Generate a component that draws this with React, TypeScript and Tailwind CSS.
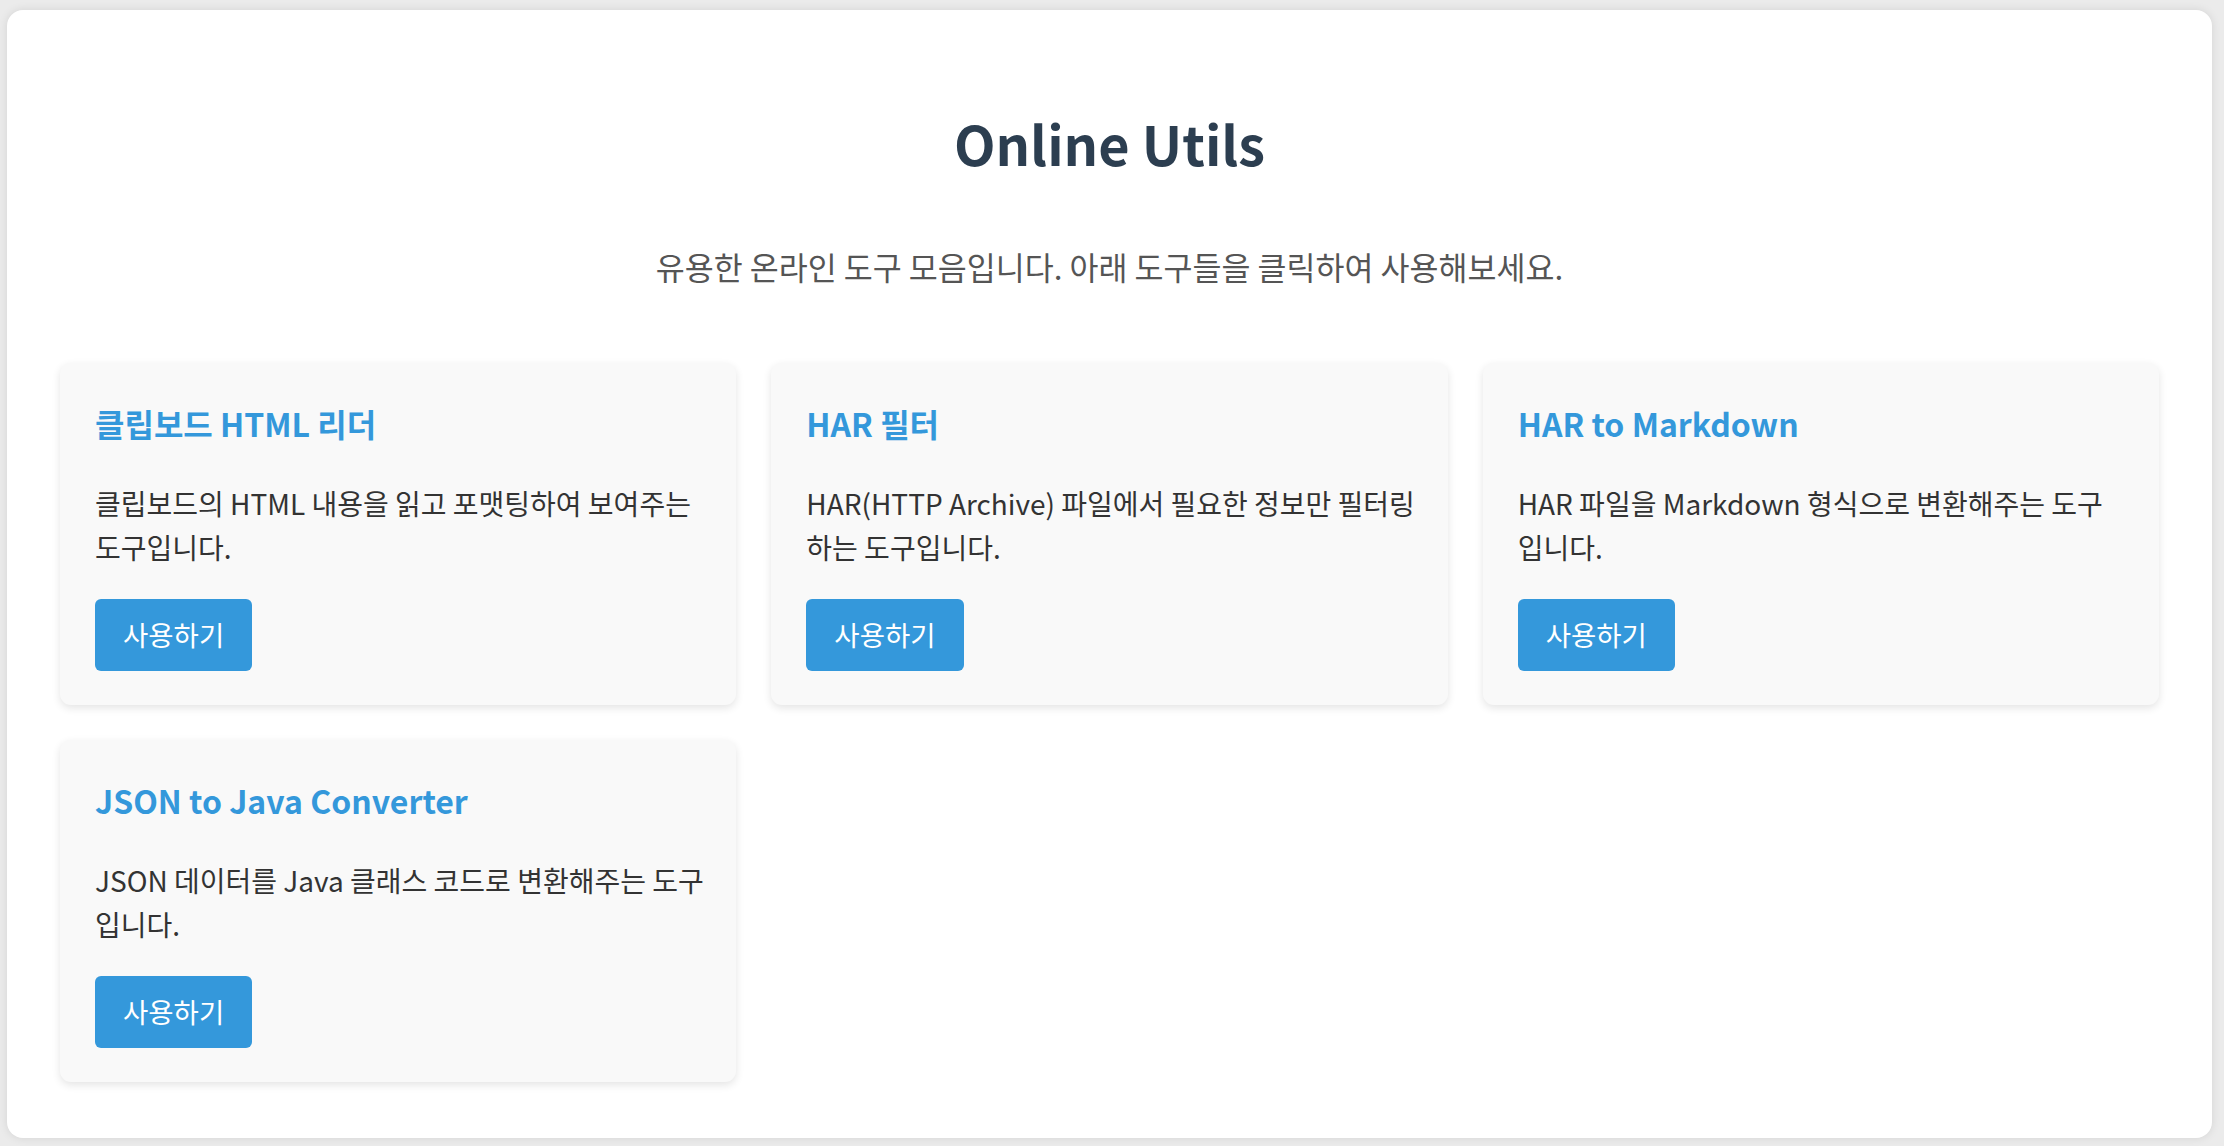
import React from 'react';

type Tool = {
  title: string;
  lines: [string, string];
};

// lines are split where the reference wraps them
const tools: Tool[] = [
  {
    title: '클립보드 HTML 리더',
    lines: ['클립보드의 HTML 내용을 읽고 포맷팅하여 보여주는', '도구입니다.'],
  },
  {
    title: 'HAR 필터',
    lines: ['HAR(HTTP Archive) 파일에서 필요한 정보만 필터링', '하는 도구입니다.'],
  },
  {
    title: 'HAR to Markdown',
    lines: ['HAR 파일을 Markdown 형식으로 변환해주는 도구', '입니다.'],
  },
  {
    title: 'JSON to Java Converter',
    lines: ['JSON 데이터를 Java 클래스 코드로 변환해주는 도구', '입니다.'],
  },
];

function ToolCard({ tool }: { tool: Tool }) {
  return (
    <div className="bg-[#f9f9f9] rounded-[11px] shadow-[0_3px_9px_rgba(0,0,0,0.11)] px-[35px] pt-[35px] pb-[34px]">
      <h2 className="mt-[5px] text-[32px] leading-[40px] font-bold text-[#3498db]">
        {tool.title}
      </h2>
      <p className="mt-[38px] text-[28px] leading-[44px] text-[#333333] whitespace-nowrap">
        {tool.lines[0]}
        <br />
        {tool.lines[1]}
      </p>
      <button className="mt-[30px] h-[72px] px-[28px] rounded-[6px] bg-[#3498db] text-white text-[27.5px] leading-none">
        사용하기
      </button>
    </div>
  );
}

export default function App() {
  return (
    <div className="h-[1146px] bg-[#ebebeb] pt-[10px] pl-[7px] pr-[12px] pb-[8px] font-['Noto_Sans_CJK_KR',sans-serif]">
      <div className="h-full bg-white rounded-[16px] shadow-[0_0_10px_rgba(0,0,0,0.1)] px-[53px] pt-[53px] pb-[53px]">
        <h1 className="mt-[44px] text-center text-[54px] leading-[72px] font-bold text-[#2c3e50]">
          Online Utils
        </h1>
        <p className="mt-[64px] text-center text-[31.5px] leading-[46px] text-[#555555]">
          유용한 온라인 도구 모음입니다. 아래 도구들을 클릭하여 사용해보세요.
        </p>

        {/* tool cards */}
        <div className="mt-[74px] grid grid-cols-3 gap-[35px]">
          {tools.map((tool) => (
            <ToolCard key={tool.title} tool={tool} />
          ))}
        </div>
      </div>
    </div>
  );
}
